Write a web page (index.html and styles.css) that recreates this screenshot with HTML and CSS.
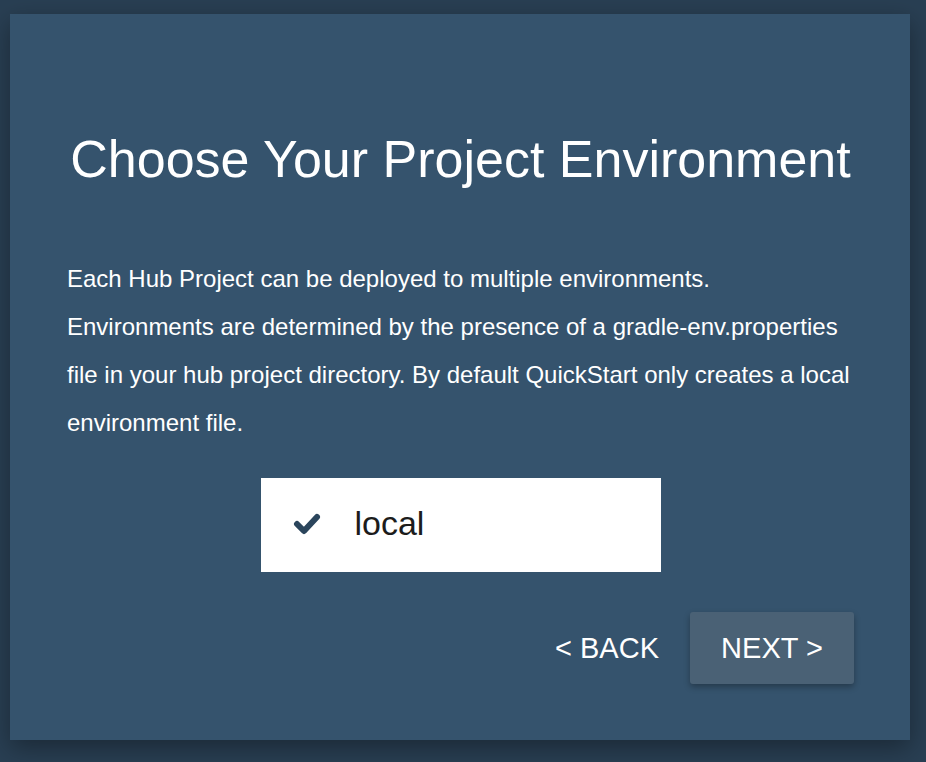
FILE: index.html
```html
<!DOCTYPE html>
<html>
<head>
<meta charset="utf-8">
<link rel="stylesheet" href="styles.css">
</head>
<body>
<div class="card">
  <h1 class="title">Choose Your Project Environment</h1>
  <p class="desc">Each Hub Project can be deployed to multiple environments. Environments are determined by the presence of a gradle-env.properties file in your hub project directory. By default QuickStart only creates a local environment file.</p>
  <div class="env-wrap">
    <div class="env">
      <svg class="check" width="28" height="22" viewBox="0 0 28 22"><path d="M4 11 L11 18 L24 4" fill="none" stroke="#2b455c" stroke-width="6" stroke-linecap="round" stroke-linejoin="round"/></svg>
      <span class="env-name">local</span>
    </div>
  </div>
  <div class="actions">
    <button class="btn-back">&lt; BACK</button>
    <button class="btn-next">NEXT &gt;</button>
  </div>
</div>
</body>
</html>
```
FILE: styles.css
```css
html, body {
  margin: 0;
  padding: 0;
}
body {
  background: #293f53;
  width: 926px;
  height: 762px;
  font-family: "Liberation Sans", Arial, sans-serif;
  overflow: hidden;
  padding-top: 14px;
  padding-left: 10px;
  box-sizing: border-box;
}
.card {
  width: 900px;
  height: 726px;
  background: #35536d;
  box-shadow: 0 8px 24px rgba(0,0,0,0.35);
  box-sizing: border-box;
  padding: 0 56px 0 57px;
  display: flex;
  flex-direction: column;
}
.title {
  margin: 117px 0 0;
  font-weight: normal;
  font-size: 52px;
  line-height: 56px;
  color: #ffffff;
  text-align: center;
}
.desc {
  margin: 68px 0 0;
  font-size: 24px;
  line-height: 48px;
  color: #ffffff;
}
.env-wrap {
  display: flex;
  justify-content: center;
  margin-top: 31px;
}
.env {
  width: 400px;
  height: 94px;
  background: #ffffff;
  display: flex;
  align-items: center;
  box-sizing: border-box;
  padding-left: 32px;
  padding-bottom: 4px;
}
.check {
  display: block;
  margin-top: 2px;
}
.env-name {
  margin-left: 34px;
  font-size: 34px;
  color: #1c1c1c;
}
.actions {
  display: flex;
  justify-content: flex-end;
  align-items: center;
  margin-top: 40px;
}
.btn-back, .btn-next {
  font-family: "Liberation Sans", Arial, sans-serif;
  font-size: 29px;
  color: #ffffff;
  border: none;
  cursor: pointer;
}
.btn-back {
  background: transparent;
  padding: 0;
  margin-right: 31px;
}
.btn-next {
  width: 164px;
  height: 72px;
  background: #4a6175;
  border-radius: 3px;
  box-shadow: 0 3px 6px rgba(0,0,0,0.3);
  padding: 0;
}
```
